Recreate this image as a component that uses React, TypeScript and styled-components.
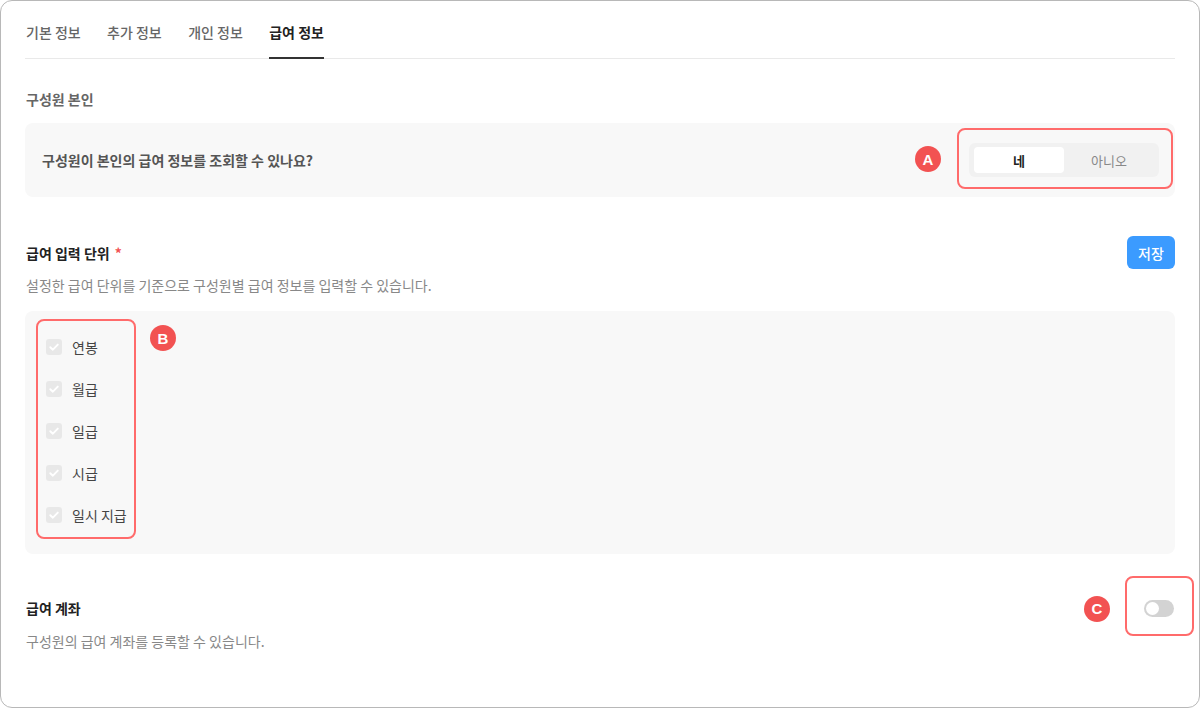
import React, { useState } from 'react';
import styled, { createGlobalStyle } from 'styled-components';

const GlobalStyle = createGlobalStyle`
  html, body {
    margin: 0;
    padding: 0;
    background: #ffffff;
  }
  body {
    font-family: "Noto Sans CJK KR", "Noto Sans", "Liberation Sans", sans-serif;
    -webkit-font-smoothing: antialiased;
  }
  * { box-sizing: border-box; }
`;

const Card = styled.div`
  width: 1200px;
  height: 708px;
  border: 1px solid #b8b8b8;
  border-radius: 12px;
  padding: 0 24px;
  background: #fff;
  overflow: hidden;
`;

const Tabs = styled.div`
  display: flex;
  gap: 26.4px;
  border-bottom: 1px solid #e9e9e9;
  padding-left: 1px;
`;

const Tab = styled.div<{ $active?: boolean }>`
  padding: 21px 0 15px;
  line-height: 20px;
  font-size: 14px;
  font-weight: ${(p) => (p.$active ? 700 : 500)};
  color: ${(p) => (p.$active ? '#222' : '#666')};
  border-bottom: 2px solid ${(p) => (p.$active ? '#333' : 'transparent')};
  margin-bottom: -1px;
  cursor: pointer;
`;

const SectionLabel = styled.div`
  margin-top: 30px;
  margin-bottom: 14px;
  line-height: 20px;
  font-size: 14px;
  font-weight: 600;
  color: #666;
  padding-left: 1px;
`;

const QuestionBox = styled.div`
  height: 74px;
  background: #f8f8f8;
  border-radius: 8px;
  padding: 0 16px 0 17px;
  display: flex;
  align-items: center;
  justify-content: space-between;
`;

const Question = styled.div`
  font-size: 14px;
  font-weight: 600;
  color: #555;
`;

const Marked = styled.div`
  position: relative;
`;

const Frame = styled.div<{ $inset: string }>`
  position: absolute;
  inset: ${(p) => p.$inset};
  border: 2px solid #ff6b6b;
  border-radius: 8px;
  pointer-events: none;
`;

const Badge = styled.div<{ $left: number; $top: number }>`
  position: absolute;
  left: ${(p) => p.$left}px;
  top: ${(p) => p.$top}px;
  width: 26px;
  height: 26px;
  border-radius: 50%;
  background: #f25252;
  color: #fff;
  font-family: "Liberation Sans", "Noto Sans", sans-serif;
  font-weight: 700;
  font-size: 15px;
  display: flex;
  align-items: center;
  justify-content: center;
`;

const Segmented = styled.div`
  display: flex;
  width: 190px;
  height: 34px;
  padding: 4px 5px;
  background: #f1f1f1;
  border-radius: 6px;
`;

const Segment = styled.div<{ $active?: boolean }>`
  flex: 1;
  display: flex;
  align-items: center;
  justify-content: center;
  border-radius: 4px;
  font-size: 13px;
  font-weight: ${(p) => (p.$active ? 600 : 400)};
  color: ${(p) => (p.$active ? '#222' : '#888')};
  background: ${(p) => (p.$active ? '#fff' : 'transparent')};
  cursor: pointer;
`;

const HeadRow = styled.div<{ $top: number }>`
  margin-top: ${(p) => p.$top}px;
  display: flex;
  align-items: center;
  justify-content: space-between;
  padding-left: 1px;
`;

const Title = styled.div`
  line-height: 20px;
  font-size: 14px;
  font-weight: 700;
  color: #222;
`;

const Required = styled.span`
  color: #f25252;
  margin-left: 5px;
  font-weight: 600;
`;

const SaveButton = styled.button`
  width: 48px;
  height: 33px;
  border: none;
  border-radius: 6px;
  background: #3b9bff;
  color: #fff;
  font-family: inherit;
  font-size: 14px;
  font-weight: 500;
  cursor: pointer;
`;

const Desc = styled.div<{ $top: number }>`
  margin-top: ${(p) => p.$top}px;
  line-height: 20px;
  font-size: 14px;
  color: #888;
  padding-left: 1px;
`;

const UnitBox = styled.div`
  margin-top: 16px;
  height: 243px;
  background: #f8f8f8;
  border-radius: 8px;
  padding: 15px 21px 18px;
`;

const CheckList = styled.div`
  display: inline-flex;
  flex-direction: column;
`;

const CheckRow = styled.label`
  height: 42px;
  display: flex;
  align-items: center;
  gap: 10px;
  font-size: 14px;
  color: #444;
`;

const CheckBox = styled.span`
  width: 16px;
  height: 16px;
  border-radius: 3px;
  background: #e8e8e8;
  display: flex;
  align-items: center;
  justify-content: center;
`;

const Switch = styled.div`
  width: 30px;
  height: 17px;
  border-radius: 9px;
  background: #d3d3d3;
  padding: 2px;
  margin-right: 1px;
`;

const Knob = styled.div`
  width: 13px;
  height: 13px;
  border-radius: 50%;
  background: #fff;
`;

const units = ['연봉', '월급', '일급', '시급', '일시 지급'];

function Check() {
  return (
    <CheckBox>
      <svg width="12" height="12" viewBox="0 0 12 12" fill="none">
        <path d="M2.3 6.2 4.9 8.7 9.8 3.6" stroke="#fff" strokeWidth="1.9" strokeLinecap="round" strokeLinejoin="round" />
      </svg>
    </CheckBox>
  );
}

export default function App() {
  const [tab, setTab] = useState('급여 정보');
  const [self, setSelf] = useState(true);
  const tabs = ['기본 정보', '추가 정보', '개인 정보', '급여 정보'];

  return (
    <>
      <GlobalStyle />
      <Card>
        <Tabs>
          {tabs.map((t) => (
            <Tab key={t} $active={t === tab} onClick={() => setTab(t)}>
              {t}
            </Tab>
          ))}
        </Tabs>

        <SectionLabel>구성원 본인</SectionLabel>
        <QuestionBox>
          <Question>구성원이 본인의 급여 정보를 조회할 수 있나요?</Question>
          <Marked>
            <Segmented>
              <Segment $active={self} onClick={() => setSelf(true)}>네</Segment>
              <Segment $active={!self} onClick={() => setSelf(false)}>아니오</Segment>
            </Segmented>
            <Frame $inset="-15px -14px -12px -12px" />
            <Badge $left={-54} $top={3}>A</Badge>
          </Marked>
        </QuestionBox>

        <HeadRow $top={39}>
          <Title>
            급여 입력 단위<Required>*</Required>
          </Title>
          <SaveButton>저장</SaveButton>
        </HeadRow>
        <Desc $top={6}>설정한 급여 단위를 기준으로 구성원별 급여 정보를 입력할 수 있습니다.</Desc>
        <UnitBox>
          <Marked as={CheckList}>
            {units.map((u) => (
              <CheckRow key={u}>
                <Check />
                {u}
              </CheckRow>
            ))}
            <Frame $inset="-7px -9px -3px -10px" />
            <Badge $left={104} $top={-1}>B</Badge>
          </Marked>
        </UnitBox>

        <HeadRow $top={44}>
          <Title>급여 계좌</Title>
          <Marked>
            <Switch>
              <Knob />
            </Switch>
            <Frame $inset="-24px -19px -19px -19px" />
            <Badge $left={-60} $top={-4}>C</Badge>
          </Marked>
        </HeadRow>
        <Desc $top={13}>구성원의 급여 계좌를 등록할 수 있습니다.</Desc>
      </Card>
    </>
  );
}
